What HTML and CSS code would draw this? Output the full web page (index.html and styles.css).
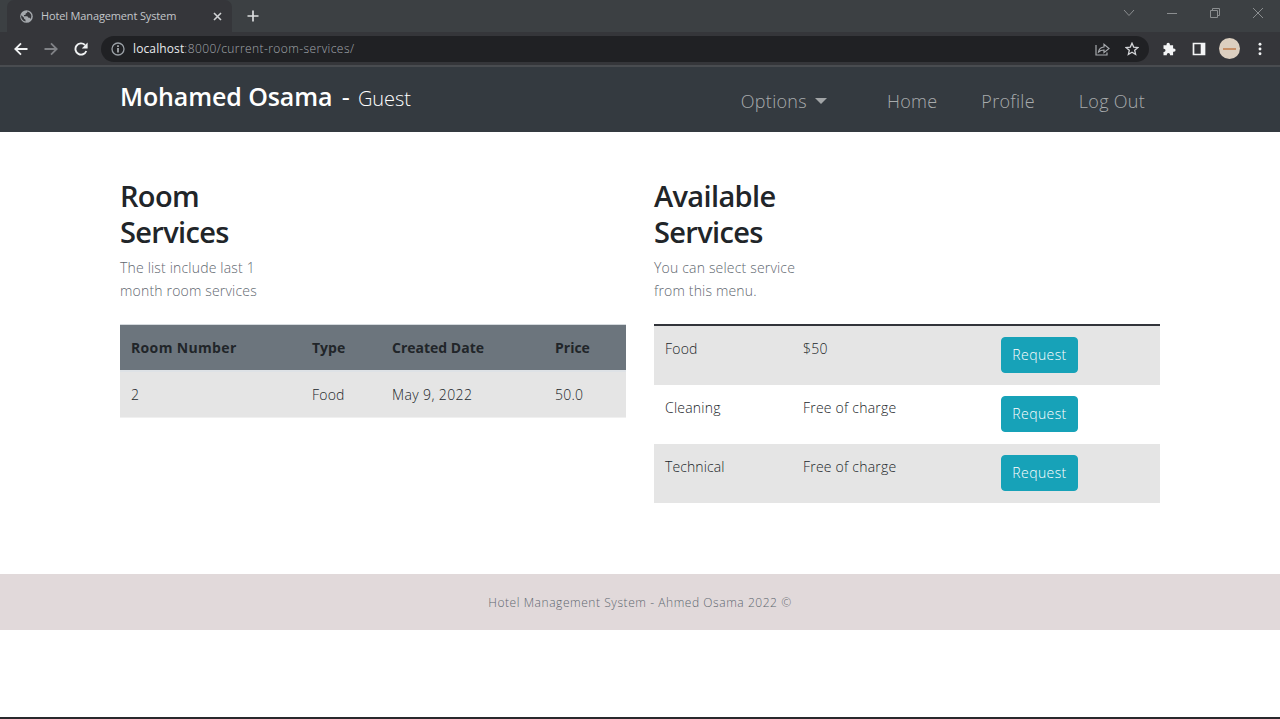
FILE: index.html
```html
<!DOCTYPE html>
<html lang="en">
<head>
<meta charset="utf-8">
<title>Hotel Management System</title>
<link rel="stylesheet" href="styles.css">
</head>
<body>
<div class="window">
  <div class="tabbar">
    <div class="tab">
      <svg class="globe" width="13" height="13" viewBox="0 0 13 13"><circle cx="6.5" cy="6.5" r="6.3" fill="#a4a8ac"/><path d="M1.300 5.200 4 7.800v1l1.500 1v1.600A5 5 0 0 1 1.300 5.200ZM7.300 1.400v1.200L5.500 3.700v1.200H4v1.300h3.300l1.200 1.500h1.200l.8 1.300A5 5 0 0 0 7.300 1.400Z" fill="#35363a"/></svg>
      <span class="tab-title">Hotel Management System</span>
      <svg class="tab-close" width="9" height="9" viewBox="0 0 9 9"><path d="m1 1 7 7M8 1 1 8" stroke="#d0d2d4" stroke-width="1.6"/></svg>
    </div>
    <svg class="newtab" width="12" height="12" viewBox="0 0 12 12"><path d="M6 .5v11M.5 6h11" stroke="#dcdee0" stroke-width="1.7"/></svg>
    <div class="winctl">
      <svg width="12" height="12" viewBox="0 0 12 12"><path d="m1 3 5 5.500L11 3"/></svg>
      <svg width="12" height="12" viewBox="0 0 12 12"><path d="M1 6.500h10"/></svg>
      <svg width="12" height="12" viewBox="0 0 12 12"><path d="M1.500 3.500h7v7h-7zM3.500 3.500v-2h7v7h-2"/></svg>
      <svg width="12" height="12" viewBox="0 0 12 12"><path d="m1 1 10 10M11 1 1 11"/></svg>
    </div>
  </div>
  <div class="toolbar">
    <svg class="nav-ico" width="14" height="14" viewBox="0 0 14 14"><path d="M13.500 7H1.500M7 1.300 1.300 7 7 12.700" fill="none" stroke="#f1f3f4" stroke-width="1.8"/></svg>
    <svg class="nav-ico" width="14" height="14" viewBox="0 0 14 14"><path d="M.5 7h12M7 1.300 12.700 7 7 12.700" fill="none" stroke="#808286" stroke-width="1.8"/></svg>
    <svg class="nav-ico" width="14" height="14" viewBox="0 0 14 14"><path d="M12.300 9A5.600 5.600 0 1 1 11 3" fill="none" stroke="#f1f3f4" stroke-width="1.9"/><path d="M13.600.4v6H7.800z" fill="#f1f3f4"/></svg>
    <div class="omnibox">
      <svg width="14" height="14" viewBox="0 0 14 14"><circle cx="7" cy="7" r="6" fill="none" stroke="#9aa0a6" stroke-width="1.3"/><path d="M7 6v4.400M7 3.300v1.600" stroke="#b5b8bc" stroke-width="1.6"/></svg>
      <span class="url"><span class="host">localhost</span>:8000/current-room-services/</span>
      <svg class="share" width="15" height="14" viewBox="0 0 15 14"><path d="M1 3v10h11v-2.500M3.500 10C4 6.800 6 5.200 9 5V2.300L14 6.500 9 10.600V8C6.500 8 5 8.600 3.500 10Z" fill="none" stroke="#a6a9ad" stroke-width="1.2"/></svg>
      <svg class="star" width="14" height="14" viewBox="0 0 14 14"><path d="m7 1.200 1.700 3.900 4.200.4-3.200 2.800.95 4.200L7 10.300l-3.650 2.200.95-4.200L1.100 5.500l4.200-.4Z" fill="none" stroke="#d4d6d9" stroke-width="1.3"/></svg>
    </div>
    <svg class="puzzle" width="14" height="14" viewBox="0 0 14 14"><path d="M1.500 3.200h3V2.400a1.700 1.700 0 0 1 3.400 0v.8h3.200v3.200h.8a1.700 1.700 0 0 1 0 3.400h-.8v3.400H8v-.6a1.600 1.600 0 0 0-3.200 0v.6H1.500V9.900h.4a1.600 1.600 0 0 0 0-3.200h-.4Z" fill="#f4f5f6"/></svg>
    <svg class="panel" width="14" height="14" viewBox="0 0 14 14"><path d="M1.500 1.500h11v11h-11z" fill="none" stroke="#f4f5f6" stroke-width="1.7"/><path d="M8.700 1h4.300v12H8.700z" fill="#f4f5f6"/></svg>
    <div class="avatar"><i></i></div>
    <svg class="dots" width="4" height="14" viewBox="0 0 4 14"><g fill="#f1f3f4"><circle cx="2" cy="2.300" r="1.450"/><circle cx="2" cy="7" r="1.450"/><circle cx="2" cy="11.700" r="1.450"/></g></svg>
  </div>
  <header class="site-nav">
    <div class="brand"><span class="name">Mohamed Osama <span class="dash">-</span></span><span class="role">Guest</span></div>
    <nav class="links">
      <a class="l-options">Options</a><i class="caret"></i>
      <a class="l-home">Home</a>
      <a class="l-profile">Profile</a>
      <a class="l-logout">Log Out</a>
    </nav>
  </header>
  <main class="content">
    <section class="col">
      <h2>Room<br>Services</h2>
      <p class="lead">The list include last 1<br>month room services</p>
      <table class="rooms">
        <thead><tr><th class="r1"><span class="t-rn">Room Number</span></th><th class="r2">Type</th><th class="r3">Created Date</th><th>Price</th></tr></thead>
        <tbody><tr><td>2</td><td>Food</td><td><span class="t-date">May 9, 2022</span></td><td>50.0</td></tr></tbody>
      </table>
    </section>
    <section class="col">
      <h2>Available<br>Services</h2>
      <p class="lead">You can select service<br>from this menu.</p>
      <table class="services">
        <tbody>
          <tr><td class="s1">Food</td><td class="s2">$50</td><td><button class="btn">Request</button></td></tr>
          <tr><td>Cleaning</td><td>Free of charge</td><td><button class="btn">Request</button></td></tr>
          <tr><td class="t-tech">Technical</td><td>Free of charge</td><td><button class="btn">Request</button></td></tr>
        </tbody>
      </table>
    </section>
  </main>
  <footer class="footer"><span>Hotel Management System - Ahmed Osama 2022 ©</span></footer>
  <div class="bottom-edge"></div>
</div>
</body>
</html>
```
FILE: styles.css
```css
* { box-sizing: border-box; }
body { margin: 0; background: #fff; font: 300 15px/22.5px "Open Sans", "Noto Sans", sans-serif; color: #212529; }
svg { display: block; flex: none; }
.window { width: 1280px; height: 719px; display: flex; flex-direction: column; overflow: hidden; }
.tabbar { height: 32px; flex: none; background: #3c4043; display: flex; align-items: center; }
.tab { width: 225px; height: 32px; margin-left: 7px; padding-left: 13px; background: #35363a; border-radius: 7px 7px 0 0; display: flex; align-items: center; }
.tab-title { width: 172px; margin-left: 8px; font-size: 11px; font-weight: 400; color: #c4c7ca; white-space: nowrap; letter-spacing: -.14px; }
.newtab { margin-left: 15px; }
.winctl { margin-left: auto; margin-right: 16px; margin-bottom: 6px; display: flex; gap: 31px; }
.winctl path { fill: none; stroke: #8b8e90; stroke-width: 1; }
.toolbar { height: 35px; flex: none; background: #35363a; border-bottom: 2px solid #494c50; display: flex; align-items: center; padding-left: 14px; }
.nav-ico { margin-right: 16px; }
.omnibox { width: 1048px; height: 26px; margin-left: -3px; border-radius: 13px; background: #202124; display: flex; align-items: center; padding: 0 10px; }
.url { margin: 2px 0 0 8px; font-size: 12px; color: #a3a8ae; white-space: nowrap; letter-spacing: .42px; }
.host { color: #e8eaed; font-weight: 400; letter-spacing: .12px; }
.share { margin-left: auto; }
.star { margin-left: 15px; }
.puzzle { margin-left: 13px; }
.panel { margin-left: 16px; }
.avatar { width: 21px; height: 21px; margin-left: 13px; border-radius: 50%; background: #dccfc0; display: flex; align-items: center; justify-content: center; }
.avatar i { width: 13px; height: 2px; background: #c79068; }
.dots { margin-left: 18px; }
.site-nav { height: 65px; flex: none; background: #343a40; padding: 0 120px; display: flex; justify-content: space-between; }
.brand { color: #fff; white-space: nowrap; line-height: 36px; padding-top: 11px; display: flex; align-items: baseline; }
.name { width: 238px; font-size: 25px; font-weight: 600; letter-spacing: -.1px; }
.dash { margin-left: 3px; font-weight: 400; }
.role { font-size: 20px; font-weight: 300; letter-spacing: -.1px; }
.links { display: flex; align-items: center; padding: 4px 15px 0 0; font-size: 18px; color: #a8abad; white-space: nowrap; letter-spacing: .28px; }
.caret { border: 6px solid transparent; border-top-color: #a2a5a7; border-bottom: 0; margin: 0 60px 2px 8px; }
.l-profile { margin: 0 44px; }
.content { height: 442px; flex: none; padding: 46px 120px 0; display: flex; gap: 28px; }
.col { width: 506px; }
h2 { margin: 0; font-size: 29px; font-weight: 600; line-height: 36px; letter-spacing: -.65px; }
.lead { margin: 7px 0 22px; font-size: 14px; color: #5f6870; white-space: nowrap; letter-spacing: .18px; }
table { width: 506px; table-layout: fixed; border-collapse: collapse; }
th, td { padding: 0 0 0 11px; text-align: left; font-size: 14px; white-space: nowrap; letter-spacing: .22px; }
.rooms th { height: 46px; padding-top: 1px; background: #6c757d; font-weight: 700; letter-spacing: 0; border-top: 1px solid #d5dade; }
.rooms td { height: 47px; padding-top: 2px; background: #e5e5e5; border-top: 2px solid #dee2e6; border-bottom: 1px solid #f0f0f0; }
.rooms .t-rn { letter-spacing: .35px; }
.rooms .t-date { letter-spacing: .38px; }
.r1 { width: 181px; }
.r2 { width: 80px; }
.r3 { width: 163px; }
.services { border-top: 2px solid #32343a; }
.services td { height: 59px; vertical-align: top; padding-top: 12px; }
.services tr:first-child td { height: 60px; }
.services tr:nth-child(odd) { background: #e5e5e5; }
.services .t-tech { letter-spacing: .1px; }
.s1 { width: 138px; }
.s2 { width: 198px; }
.btn { display: block; width: 77px; height: 36px; margin-top: -1px; padding: 1px 0 0; border: 1px solid #17a2b8; border-radius: 4px; background: #17a2b8; color: #fff; font: inherit; font-size: 14px; letter-spacing: .4px; }
.footer { height: 56px; flex: none; padding-top: 2px; background: #e1d9da; color: #5f6870; display: flex; align-items: center; justify-content: center; font-size: 12px; white-space: nowrap; letter-spacing: .56px; }
.bottom-edge { height: 2px; flex: none; margin-top: auto; background: #29292c; }
```
